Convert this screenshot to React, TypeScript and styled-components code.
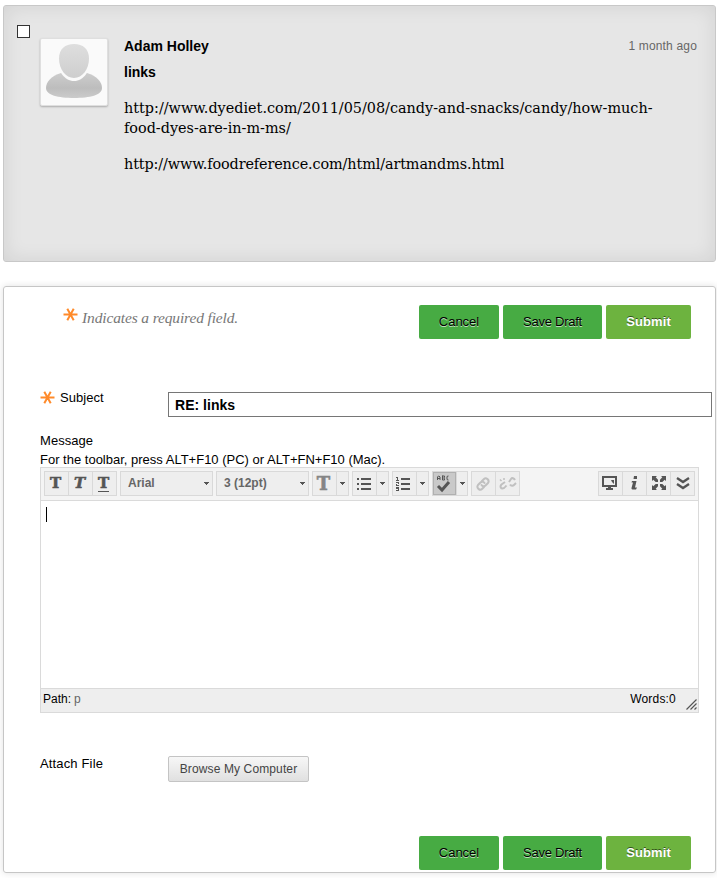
import React from 'react';
import styled, { createGlobalStyle, css } from 'styled-components';

const Global = createGlobalStyle`
  *, *::before, *::after { box-sizing: border-box; }
  body {
    margin: 0;
    background: #fff;
    color: #000;
    font: 13px/16px "Liberation Sans", Arial, sans-serif;
  }
  p, h2, h3 { margin: 0; }
  svg { display: block; flex: none; }
`;

const Page = styled.main`
  display: flex;
  flex-direction: column;
  gap: 24px;
  width: 717px;
  height: 878px;
  padding: 5px 1px 5px 3px;
  overflow: hidden;
`;

const Post = styled.article`
  display: flex;
  height: 257px;
  flex: none;
  padding: 19px 18px 0 13px;
  border: 1px solid #c8c8c8;
  border-radius: 3px;
  background: #e6e6e6;
  box-shadow: inset 0 0 20px rgba(0, 0, 0, 0.09);
`;

const Check = styled.input`
  appearance: none;
  width: 13px;
  height: 13px;
  margin: 0;
  border: 1px solid #333;
  background: #fff;
`;

const Avatar = styled.div`
  width: 68px;
  height: 68px;
  margin: 13px 16px 0 10px;
  padding: 1px;
  border: 1px solid #dfdfdf;
  border-radius: 2px;
  background: #fafafa;
  box-shadow: 0 1px 2px rgba(0, 0, 0, 0.25);
`;

const PostBody = styled.div`
  flex: 1;
  padding-top: 13px;
`;

const PostHead = styled.header`
  display: flex;
  justify-content: space-between;
  height: 26px;
`;

const Name = styled.h2`
  font-size: 14px;
  line-height: 16px;
`;

const Time = styled.time`
  color: #666;
  font-size: 12px;
  line-height: 16px;
  letter-spacing: 0.17px;
`;

const PostText = styled.p<{ $spacing: string }>`
  margin-top: 16px;
  font: 14.4px/20px "DejaVu Serif", serif;
  letter-spacing: ${(p) => p.$spacing};
  white-space: nowrap;
`;

const PostContent = styled.div`
  padding-top: 2px;
`;

const Form = styled.form`
  height: 587px;
  flex: none;
  padding: 18px 3px 0 36px;
  border: 1px solid #c6c6c6;
  border-radius: 3px;
  box-shadow: 0 0 7px rgba(0, 0, 0, 0.12);
`;

const TopRow = styled.div`
  display: flex;
  justify-content: space-between;
  height: 86px;
  padding: 0 21px 0 23px;
`;

const Required = styled.p`
  display: flex;
  gap: 4px;
  padding-top: 3px;
  color: #777;
  font: italic 15.5px/20px "Liberation Serif", serif;
  letter-spacing: -0.14px;
`;

const Actions = styled.div`
  display: flex;
  gap: 4px;
`;

const Action = styled.button<{ $width: number; $spacing?: number; $primary?: boolean }>`
  width: ${(p) => p.$width}px;
  height: 34px;
  padding: 0;
  border: 0;
  border-radius: 2px;
  background: #47ab43;
  color: #000;
  font: 13px/16px "Liberation Sans", Arial, sans-serif;
  letter-spacing: ${(p) => p.$spacing ?? 0}px;
  text-shadow: 0 1px 0 rgba(255, 255, 255, 0.65);
  ${(p) =>
    p.$primary &&
    css`
      background: #6db33f;
      color: #fff;
      font-weight: bold;
      text-shadow: 0 -1px 0 rgba(0, 0, 0, 0.55);
    `}
`;

const Field = styled.div`
  display: flex;
`;

const Label = styled.label`
  display: flex;
  gap: 5px;
  width: 128px;
`;

const LabelText = styled.span`
  margin-top: -1px;
  letter-spacing: 0.05px;
`;

const Subject = styled.input`
  width: 544px;
  height: 25px;
  margin: 1px 0 0;
  padding: 1px 6px 0;
  border: 1px solid #767676;
  border-radius: 0;
  font: bold 14px/18px "Liberation Sans", Arial, sans-serif;
  letter-spacing: 0.02px;
`;

const MessageLabel = styled.p`
  margin-top: 16px;
  letter-spacing: 0.05px;
`;

const Hint = styled.p`
  margin-top: 3px;
  white-space: nowrap;
`;

const Editor = styled.section`
  width: 659px;
  height: 246px;
  margin-top: -1px;
  border: 1px solid #dadada;
`;

const Toolbar = styled.div`
  display: flex;
  gap: 3px;
  height: 33px;
  padding: 3px;
  border-bottom: 1px solid #dadada;
  background: #f4f4f4;
`;

const Group = styled.div<{ $right?: boolean }>`
  display: flex;
  height: 25px;
  border: 1px solid #d9d9d9;
  background: #eee;
  ${(p) => p.$right && 'margin-left: auto;'}
`;

const Tool = styled.button<{ $width?: number; $active?: boolean }>`
  box-sizing: content-box;
  display: flex;
  flex: none;
  align-items: center;
  justify-content: center;
  width: ${(p) => p.$width ?? 23}px;
  height: 23px;
  padding: 0;
  border: 0;
  background: ${(p) => (p.$active ? '#c9c9c9' : 'transparent')};
  box-shadow: ${(p) => (p.$active ? 'inset 0 0 0 1px #b0b0b0' : 'none')};
  color: #555;

  &:not(:first-child) {
    border-left: 1px solid #d9d9d9;
  }
`;

const Glyph = styled.span<{ $italic?: boolean; $underline?: boolean; $light?: boolean }>`
  height: ${(p) => (p.$underline ? 16 : 15)}px;
  margin-right: 2px;
  color: ${(p) => (p.$light ? '#858585' : '#555')};
  font: bold ${(p) => (p.$light ? 18 : 15)}px/15px "DejaVu Serif", serif;
  font-style: ${(p) => (p.$italic ? 'italic' : 'normal')};
  border-bottom: ${(p) => (p.$underline ? '1px solid #555' : '0')};
  -webkit-text-stroke: 0.6px;
`;

const Select = styled.button`
  display: flex;
  align-items: center;
  justify-content: space-between;
  width: 91px;
  padding: 0 3px 1px 7px;
  border: 0;
  background: transparent;
  color: #666;
  font: bold 12px/16px "Liberation Sans", Arial, sans-serif;
`;

const Canvas = styled.div`
  height: 187px;
  padding: 6px 5px;
`;

const Caret = styled.span`
  display: block;
  width: 1px;
  height: 15px;
  background: #000;
`;

const Status = styled.footer`
  display: flex;
  height: 24px;
  padding: 2px 0 0 2px;
  border-top: 1px solid #dadada;
  background: #eee;
  font-size: 12px;
  line-height: 16px;
`;

const PathName = styled.span`
  margin-left: 3px;
  color: #666;
`;

const Words = styled.span`
  margin-left: auto;
  letter-spacing: 0.2px;
`;

const Grip = styled.span`
  margin: 8px 1px 0 10px;
`;

const Attach = styled(Field)`
  margin-top: 43px;
`;

const AttachLabel = styled.span`
  width: 128px;
  letter-spacing: 0.15px;
`;

const Browse = styled.button`
  width: 141px;
  height: 26px;
  padding: 0;
  border: 1px solid #c4c4c4;
  border-radius: 2px;
  background: linear-gradient(#f7f7f7, #e0e0e0);
  color: #444;
  font: 12px/16px "Liberation Sans", Arial, sans-serif;
  letter-spacing: 0.12px;
`;

const BottomRow = styled.div`
  display: flex;
  justify-content: flex-end;
  margin-top: 54px;
  padding-right: 21px;
`;

const Star = () => (
  <svg width="15" height="14" viewBox="0 0 15 14" fill="none" stroke="#ff8a2a" strokeWidth="2">
    <path d="M.5 6.500h14M4.300 .700l6.400 11.600M10.700 .700l-6.400 11.600" />
  </svg>
);

const Arrow = () => (
  <svg width="5" height="3" viewBox="0 0 5 3" fill="#555" shapeRendering="crispEdges">
    <path d="M0 0h5v1H4v1H3v1H2V2H1V1H0z" />
  </svg>
);

const BulletList = () => (
  <svg width="16" height="12" fill="#555" shapeRendering="crispEdges">
    <path d="M0 0h2v2H0zM4 0h10v2H4zM0 5h2v2H0zM4 5h10v2H4zM0 10h2v2H0zM4 10h10v2H4z" />
  </svg>
);

const NumberList = () => (
  <svg width="17" height="14" fill="#555" shapeRendering="crispEdges">
    <path d="M5 1h9v2H5zM5 6h9v2H5zM5 11h9v2H5zM1 0h1v3h1v1H0V3h1V1H0V0zM0 5h3v2H1v1h2v1H0V7h2V6H0zM0 10h3v4H0v-1h2v-1H0v-1h2v0H0z" />
  </svg>
);

const SpellCheck = () => (
  <svg width="17" height="19" fill="none" stroke="#555">
    <path d="M1.500 6V3l1-1h.500l1 1v3M1.500 4.500h2.500M6.500 1.500v4.500M6.500 2h2v1.500l-1 .500 1 .500v1.500h-2M12.500 2h-1l-.500 1v2l.500 1h1" strokeWidth="1" />
    <path d="M2 12l4 4 7-8" strokeWidth="3" />
  </svg>
);

const Link = () => (
  <svg width="16" height="14" fill="none" stroke="#c0c0c0" strokeWidth="2" strokeLinecap="round">
    <path d="M6 4l2-2c2-2 6 1 4 4L9.500 8.500c-1 1-3 1-4-.500" />
    <path d="M8 10l-2 2c-2 2-6-1-4-4l2.500-2.500c1-1 3-1 4 .500" />
  </svg>
);

const Unlink = () => (
  <svg width="18" height="16" fill="none" stroke="#c0c0c0" strokeWidth="2">
    <path d="M10 6l2-3c1-1.500 3-1 4 1M17 7l-2 2c-1 1-3 1-4-.500M6 6L2.500 8.500c-2 2-.500 4 1 4s2.500-1 4-3" />
    <path d="M5 4V2M2.500 5L1 3.500" strokeWidth="1.500" />
  </svg>
);

const Monitor = () => (
  <svg width="17" height="16" fill="none" stroke="#555">
    <path d="M1 1h13v9H1z" strokeWidth="2" />
    <path d="M9 4h3v4l-1-1-1-1z" fill="#555" stroke="none" />
    <path d="M6 10h3v2h2v2H4v-2h2z" fill="#555" stroke="none" />
  </svg>
);

const Info = () => (
  <svg width="7" height="16" fill="#555">
    <path d="M3 0h3v3H2.500zM1 5h4.500L4 11.500h2L5 13.500H1.500c-1 0-1-1-1-1.500L2 6.500H.500z" />
  </svg>
);

const Expand = () => (
  <svg width="14" height="16" viewBox="0 0 14 16" fill="#555">
    <path d="M0 0h5L3.700 1.300 6 3.700v2.300H3.700L1.300 3.700 0 5zM14 0v5l-1.300-1.300L10.300 6H8V3.700l2.300-2.400L9 0zM0 14V9l1.300 1.300L3.700 8H6v2.300l-2.300 2.400L5 14zM14 14H9l1.300-1.300L8 10.300V8h2.300l2.400 2.300L14 9z" />
  </svg>
);

const Chevrons = () => (
  <svg width="14" height="13" fill="none" stroke="#555" strokeWidth="2.300">
    <path d="M1 1l6 4 6-4M1 7l6 4 6-4" />
  </svg>
);

const Resize = () => (
  <svg width="11" height="11" fill="none" stroke="#555" strokeWidth="1.200">
    <path d="M.500 10.500l10-10M4.500 10.500l6-6M8.500 10.500l2-2" />
  </svg>
);

const Person = () => (
  <svg width="64" height="64" viewBox="0 0 64 64">
    <defs>
      <linearGradient id="head" x2="0" y2="1"><stop stopColor="#dedede" /><stop offset="1" stopColor="#cecece" /></linearGradient>
      <linearGradient id="torso" x2="0" y2="1"><stop stopColor="#cdcdcd" /><stop offset=".6" stopColor="#bdbdbd" /><stop offset="1" stopColor="#cbcbcb" /></linearGradient>
    </defs>
    <path d="M19 33C9 36 4 42 4 48c0 7 12 10 28 10s28-3 28-10c0-6-5-12-15-15z" fill="url(#torso)" />
    <path d="M32 2c10 0 17 6 17 16 0 12.500-7.500 23-17 23s-17-10.500-17-23C15 8 22 2 32 2z" fill="#fafafa" />
    <path d="M32 4c9 0 15 5 15 14.500 0 10.500-6.500 19.500-15 19.500s-15-9-15-19.500C17 9 23 4 32 4z" fill="url(#head)" />
  </svg>
);

const FormActions = () => (
  <Actions>
    <Action type="button" $width={80}>Cancel</Action>
    <Action type="button" $width={99} $spacing={-0.25}>Save Draft</Action>
    <Action type="button" $width={85} $spacing={0.1} $primary>Submit</Action>
  </Actions>
);

export default function App() {
  return (
    <>
      <Global />
      <Page>
        <Post>
          <Check type="checkbox" aria-label="Select message" />
          <Avatar><Person /></Avatar>
          <PostBody>
            <PostHead><Name>Adam Holley</Name><Time>1 month ago</Time></PostHead>
            <Name as="h3">links</Name>
            <PostContent>
              <PostText $spacing="0px">
                http://www.dyediet.com/2011/05/08/candy-and-snacks/candy/how-much-<br />
                food-dyes-are-in-m-ms/
              </PostText>
              <PostText $spacing="-0.11px">http://www.foodreference.com/html/artmandms.html</PostText>
            </PostContent>
          </PostBody>
        </Post>

        <Form>
          <TopRow>
            <Required><Star />Indicates a required field.</Required>
            <FormActions />
          </TopRow>
          <Field>
            <Label htmlFor="subject"><Star /><LabelText>Subject</LabelText></Label>
            <Subject id="subject" defaultValue="RE: links" />
          </Field>
          <MessageLabel>Message</MessageLabel>
          <Hint>For the toolbar, press ALT+F10 (PC) or ALT+FN+F10 (Mac).</Hint>
          <Editor>
            <Toolbar>
              <Group>
                <Tool type="button"><Glyph>T</Glyph></Tool>
                <Tool type="button"><Glyph $italic>T</Glyph></Tool>
                <Tool type="button"><Glyph $underline>T</Glyph></Tool>
              </Group>
              <Group><Select type="button">Arial<Arrow /></Select></Group>
              <Group><Select type="button">3 (12pt)<Arrow /></Select></Group>
              <Group>
                <Tool type="button"><Glyph $light>T</Glyph></Tool>
                <Tool type="button" $width={11}><Arrow /></Tool>
              </Group>
              <Group>
                <Tool type="button"><BulletList /></Tool>
                <Tool type="button" $width={11}><Arrow /></Tool>
              </Group>
              <Group>
                <Tool type="button"><NumberList /></Tool>
                <Tool type="button" $width={11}><Arrow /></Tool>
              </Group>
              <Group>
                <Tool type="button" $active><SpellCheck /></Tool>
                <Tool type="button" $width={10}><Arrow /></Tool>
              </Group>
              <Group>
                <Tool type="button"><Link /></Tool>
                <Tool type="button"><Unlink /></Tool>
              </Group>
              <Group $right>
                <Tool type="button"><Monitor /></Tool>
                <Tool type="button"><Info /></Tool>
                <Tool type="button"><Expand /></Tool>
                <Tool type="button"><Chevrons /></Tool>
              </Group>
            </Toolbar>
            <Canvas><Caret /></Canvas>
            <Status>
              <span>Path:</span><PathName>p</PathName>
              <Words>Words:0</Words>
              <Grip><Resize /></Grip>
            </Status>
          </Editor>
          <Attach>
            <AttachLabel>Attach File</AttachLabel>
            <Browse type="button">Browse My Computer</Browse>
          </Attach>
          <BottomRow><FormActions /></BottomRow>
        </Form>
      </Page>
    </>
  );
}
